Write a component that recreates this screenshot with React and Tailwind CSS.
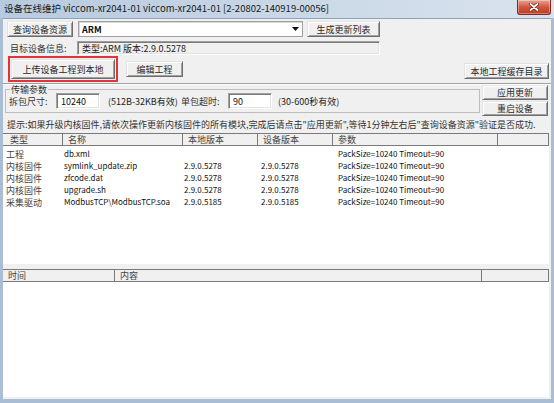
import clsx from 'clsx'

const rows = [
  ['工程', 'db.xml', '', '', 'PackSize=10240 Timeout=90'],
  ['内核固件', 'symlink_update.zip', '2.9.0.5278', '2.9.0.5278', 'PackSize=10240 Timeout=90'],
  ['内核固件', 'zfcode.dat', '2.9.0.5278', '2.9.0.5278', 'PackSize=10240 Timeout=90'],
  ['内核固件', 'upgrade.sh', '2.9.0.5278', '2.9.0.5278', 'PackSize=10240 Timeout=90'],
  ['采集驱动', 'ModbusTCP\\ModbusTCP.soa', '2.9.0.5185', '2.9.0.5185', 'PackSize=10240 Timeout=90'],
]

// classic raised push button
function Btn({ className, children }) {
  return (
    <button
      className={clsx(
        'flex shrink-0 items-center justify-center bg-[#f0f0f0] text-[#2a2a2a] border border-t-[#e3e3e3] border-l-[#e3e3e3] border-r-[#6d6d6d] border-b-[#6d6d6d] shadow-[inset_1px_1px_0_#ffffff,inset_-1px_-1px_0_#a0a0a0]',
        className
      )}
    >
      {children}
    </button>
  )
}

// sunken edit box
function Field({ className, children }) {
  return (
    <div
      className={clsx(
        'flex shrink-0 items-center pl-[4px] border border-t-[#a0a0a0] border-l-[#a0a0a0] border-r-[#ffffff] border-b-[#ffffff] shadow-[inset_1px_1px_0_#7a7a7a,inset_-1px_-1px_0_#e3e3e3]',
        className
      )}
    >
      {children}
    </div>
  )
}

function HeaderCell({ className, children }) {
  return (
    <div className={clsx('flex items-center border-r border-[#7a7a7a] pl-[5px] text-[#444]', className)}>
      {children}
    </div>
  )
}

export default function App() {
  return (
    <div className="flex h-[403px] w-[554px] flex-col overflow-hidden bg-[#a9bdd4] font-['Noto_Sans_CJK_SC',sans-serif] text-[9px] leading-none text-[#1e1e1e]">
      {/* title bar */}
      <div className="flex h-[18px] shrink-0 items-start bg-gradient-to-r from-[#b7cadf] via-[#c9d7e6] to-[#d9e3ee]">
        <div className="ml-[4px] mt-[4px] text-[9.5px] text-[#1a1a1a]">
          设备在线维护 viccom-xr2041-01 viccom-xr2041-01 [2-20802-140919-00056]
        </div>
        <div className="ml-auto mr-[3px] flex h-[15px] w-[34px] items-center justify-center rounded-b-[3px] border border-t-0 border-[#7a2a22] bg-gradient-to-b from-[#e5a493] via-[#d2553f] to-[#c03a22] shadow-[inset_0_0_0_1px_rgba(255,255,255,0.35)]">
          <svg width="10" height="8" viewBox="0 0 10 8">
            <path d="M1.5 1 L8.5 7 M8.5 1 L1.5 7" stroke="#5a1a10" strokeWidth="3" strokeLinecap="round" />
            <path d="M1.5 1 L8.5 7 M8.5 1 L1.5 7" stroke="#ffffff" strokeWidth="1.8" strokeLinecap="round" />
          </svg>
        </div>
      </div>

      {/* client area */}
      <div className="ml-[3px] mr-[3px] flex h-[381px] flex-col border-t border-[#8ea2ba] bg-[#f0f0f0]">
        {/* query row */}
        <div className="mt-[2px] flex h-[16px] items-stretch">
          <Btn className="ml-[4px] w-[66px]">查询设备资源</Btn>
          <div className="ml-[5px] flex w-[225px] items-center border border-[#a0a0a0] bg-white shadow-[inset_1px_1px_0_#d8d8d8]">
            <span className="ml-[3px] font-bold text-[#111]">ARM</span>
            <div className="ml-auto mr-[1px] flex h-[12px] w-[12px] items-center justify-center">
              <svg width="7" height="5" viewBox="0 0 7 5">
                <path d="M0 0 H7 L3.5 4 Z" fill="#111" />
              </svg>
            </div>
          </div>
          <Btn className="ml-[4px] w-[73px]">生成更新列表</Btn>
        </div>

        {/* target device info */}
        <div className="mt-[4px] flex h-[14px] items-center">
          <div className="ml-[7px] w-[67px] text-[#333]">目标设备信息:</div>
          <Field className="h-[14px] w-[303px] bg-[#f0f0f0] text-[#222]">类型:ARM 版本:2.9.0.5278</Field>
        </div>

        {/* project actions */}
        <div className="mt-[1px] flex h-[26px] items-start">
          <div className="ml-[5px] flex h-[26px] w-[110px] border-2 border-[#e0343a] p-[1px]">
            <Btn className="w-full">上传设备工程到本地</Btn>
          </div>
          <Btn className="ml-[8px] mt-[5px] h-[16px] w-[57px]">编辑工程</Btn>
          <Btn className="ml-auto mr-[2px] mt-[7px] h-[16px] w-[85px]">本地工程缓存目录</Btn>
        </div>

        <div className="mt-[1px] h-[2px] shrink-0 border-t border-b border-t-[#a0a0a0] border-b-white" />

        {/* transfer settings */}
        <div className="flex h-[32px] items-start">
          <fieldset className="ml-[2px] h-[28px] w-[475px] border border-[#bdbdbd] px-[2px]">
            <legend className="ml-[2px] px-[1px] text-[#333]">传输参数</legend>
            <div className="-mt-[1px] flex h-[16px] items-center">
              <span className="ml-[1px] w-[47px] text-[#333]">拆包尺寸:</span>
              <Field className="h-[16px] w-[44px] bg-white text-[#111]">10240</Field>
              <span className="ml-[8px] w-[73px] text-[#222]">(512B-32KB有效)</span>
              <span className="w-[47px] text-[#333]">单包超时:</span>
              <Field className="h-[16px] w-[44px] bg-white text-[#111]">90</Field>
              <span className="ml-[6px] text-[#222]">(30-600秒有效)</span>
            </div>
          </fieldset>
          <div className="ml-[2px] flex flex-col gap-[1px]">
            <Btn className="h-[15px] w-[66px]">应用更新</Btn>
            <Btn className="h-[15px] w-[66px]">重启设备</Btn>
          </div>
        </div>

        <div className="ml-[4px] mt-[3px] h-[10px] whitespace-nowrap text-[#333]">
          提示:如果升级内核固件,请依次操作更新内核固件的所有模块,完成后请点击"应用更新",等待1分钟左右后"查询设备资源"验证是否成功.
        </div>

        {/* update list */}
        <div className="mr-[2px] mt-[3px] flex h-[131px] shrink-0 flex-col bg-white">
          <div className="grid h-[13px] shrink-0 grid-cols-[60px_120px_75px_75px_165px_1fr] border-y border-[#7a7a7a] bg-[#f0f0f0]">
            <HeaderCell className="pl-[7px]">类型</HeaderCell>
            <HeaderCell>名称</HeaderCell>
            <HeaderCell className="pl-[4px]">本地版本</HeaderCell>
            <HeaderCell className="pl-[4px]">设备版本</HeaderCell>
            <HeaderCell>参数</HeaderCell>
            <HeaderCell />
          </div>
          <div className="mt-[2px] flex flex-col">
            {rows.map((r, i) => (
              <div key={i} className="grid h-[12px] grid-cols-[60px_120px_75px_75px_165px_1fr] items-center text-[8px] text-[#111]">
                <div className="pl-[3px] text-[9px] text-[#444]">{r[0]}</div>
                <div className="pl-[1px]">{r[1]}</div>
                <div className="pl-[1px]">{r[2]}</div>
                <div className="pl-[3px]">{r[3]}</div>
                <div className="pl-[5px]">{r[4]}</div>
                <div />
              </div>
            ))}
          </div>
        </div>

        <div className="h-[5px] shrink-0" />

        {/* log list */}
        <div className="mr-[2px] flex h-[128px] shrink-0 flex-col bg-white">
          <div className="grid h-[13px] shrink-0 grid-cols-[112px_367px_1fr] border-y border-[#7a7a7a] bg-[#f0f0f0]">
            <HeaderCell className="pl-[5px]">时间</HeaderCell>
            <HeaderCell>内容</HeaderCell>
            <HeaderCell />
          </div>
        </div>
      </div>
    </div>
  )
}
